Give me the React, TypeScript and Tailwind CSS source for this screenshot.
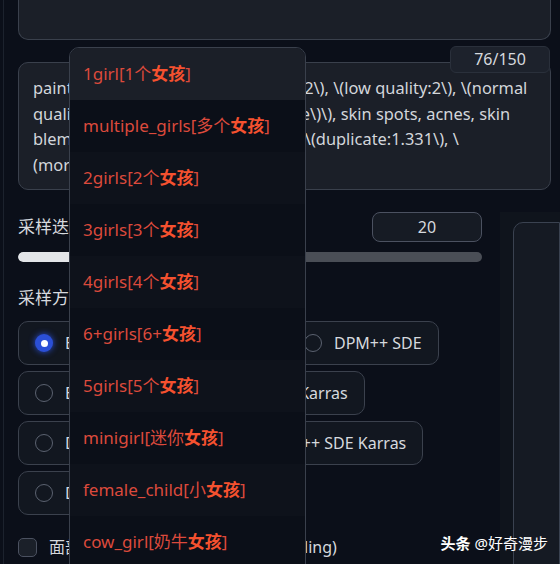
import React from "react";

const FONT = { fontFamily: '"Noto Sans", "Noto Sans CJK SC", sans-serif' };

const tags = [
  { en: "1girl", num: "1个" },
  { en: "multiple_girls", num: "多个" },
  { en: "2girls", num: "2个" },
  { en: "3girls", num: "3个" },
  { en: "4girls", num: "4个" },
  { en: "6+girls", num: "6+" },
  { en: "5girls", num: "5个" },
  { en: "minigirl", num: "迷你" },
  { en: "female_child", num: "小" },
  { en: "cow_girl", num: "奶牛" },
];

// first box of each row sits under the dropdown, its width keeps the visible box in place
const samplerRows: { label: string; checked?: boolean; w?: string }[][] = [
  [{ label: "Euler a", checked: true, w: "w-[261px]" }, { label: "DPM++ SDE" }],
  [{ label: "Euler", w: "w-[177px]" }, { label: "DPM2 Karras" }],
  [{ label: "DPM2 a", w: "w-[193px]" }, { label: "DPM++ SDE Karras" }],
  [{ label: "DDIM", w: "w-[200px]" }],
];

const Radio = ({ label, checked, w }: { label: string; checked?: boolean; w?: string }) => (
  <div
    className={`flex items-center gap-3 h-[44px] pl-4 pr-4 rounded-[10px] border border-[#3b414d] bg-[#121720] ${w ?? ""}`}
  >
    {checked ? (
      <span className="w-[18px] h-[18px] shrink-0 rounded-full bg-[#2b4fd6] flex items-center justify-center shadow-[0_0_6px_#2b4fd6]">
        <span className="w-[7px] h-[7px] rounded-full bg-white" />
      </span>
    ) : (
      <span className="w-[18px] h-[18px] shrink-0 rounded-full border border-[#5b6270]" />
    )}
    <span className="text-[16px] text-[#d6d9de] whitespace-nowrap">{label}</span>
  </div>
);

export default function App() {
  return (
    <div
      className="relative w-[560px] h-[564px] overflow-hidden bg-[#0b0f19] text-[#d6d9de]"
      style={FONT}
    >
      <div className="h-full ml-[3px] border-l border-[#1c222d] pl-[14px]">
        {/* prompt boxes */}
        <div className="flex flex-col gap-[22px] pr-[9px]">
          <div className="h-[40px] rounded-b-[10px] border border-t-0 border-[#3a404c] bg-[#1b1f28]" />
          <div className="relative h-[128px] rounded-[10px] border border-[#3a404c] bg-[#1b1f28] pl-[14px] pt-[12px] text-[16.4px] leading-[25.5px] text-[#d3d6db] whitespace-nowrap">
            <div>paintings, sketches, \(worst quality:2\), \(low quality:2\), \(normal</div>
            <div>quality:2\), lowres, text, \(\(grayscale\)\), skin spots, acnes, skin</div>
            <div>blemishes, age spot, \(ugly:1.331\), \(duplicate:1.331\), \</div>
            <div>(morbid:1.21\), \(mutilated:1.21\)</div>
            <div className="absolute -top-[17px] right-0 w-[100px] h-[27px] rounded-md bg-[#1d222c] border border-[#2a303b] flex items-center justify-center text-[16px] text-[#d6d9de]">
              76/150
            </div>
          </div>
        </div>

        {/* settings */}
        <div className="flex gap-[18px] mt-[22px]">
          <div className="w-[464px] shrink-0 flex flex-col">
            <div className="flex items-center justify-between h-[30px]">
              <span className="text-[17px] text-[#d6d9de]">采样迭代步数 (Steps)</span>
              <div className="w-[110px] h-[30px] rounded-lg border border-[#4b5160] bg-[#161b24] flex items-center justify-center text-[16px] text-[#d6d9de]">
                20
              </div>
            </div>
            <div className="mt-[10px] h-[10px] rounded-full bg-[#4a4e56] overflow-hidden">
              <div className="h-full rounded-full bg-[#e3e5e8]" style={{ width: `${(20 / 150) * 100}%` }} />
            </div>
            <div className="mt-[24px] text-[17px] leading-[24px] text-[#d6d9de]">采样方法 (Sampler)</div>
            <div className="mt-[11px] flex flex-col gap-[6px]">
              {samplerRows.map((row, i) => (
                <div key={i} className="flex gap-2">
                  {row.map((r) => (
                    <Radio key={r.label} label={r.label} checked={r.checked} w={r.w} />
                  ))}
                </div>
              ))}
            </div>
            <div className="mt-[20px] flex items-center gap-[90px] text-[16px]">
              <div className="flex items-center gap-3">
                <span className="w-[19px] h-[19px] rounded-[5px] border border-[#4b5160] bg-[#1b2029]" />
                <span>面部修复</span>
              </div>
              <div className="flex items-center gap-3">
                <span className="w-[19px] h-[19px] rounded-[5px] border border-[#4b5160] bg-[#1b2029]" />
                <span>可平铺 (Tiling)</span>
              </div>
            </div>
          </div>
          <div className="flex-1 bg-[#0f141c] pt-[10px] pl-[13px] h-[360px]">
            <div className="h-full rounded-tl-[10px] border border-[#3a4250] bg-[#151a23]" />
          </div>
        </div>
      </div>

      {/* autocomplete dropdown */}
      <div className="absolute left-[69px] top-[47px] w-[237px] h-[540px] rounded-t-[10px] border border-[#3a404c] bg-[#0d111a] overflow-hidden z-10">
        {tags.map((t, i) => (
          <div
            key={t.en}
            className={`h-[52px] flex items-center pl-[13px] text-[17px] text-[#dc4a3c] whitespace-nowrap ${
              i === 0 ? "bg-[#1b1f28]" : i % 2 === 0 ? "bg-[#0e121b]" : "bg-[#0b0f18]"
            }`}
          >
            {t.en}[{t.num}
            <span className="font-bold text-[#f5512f]">女孩</span>]
          </div>
        ))}
      </div>

      {/* watermark */}
      <div className="absolute right-[12px] bottom-[10px] text-[15px] text-white z-20 flex gap-1">
        <span className="font-bold">头条</span>
        <span>@好奇漫步</span>
      </div>
    </div>
  );
}
